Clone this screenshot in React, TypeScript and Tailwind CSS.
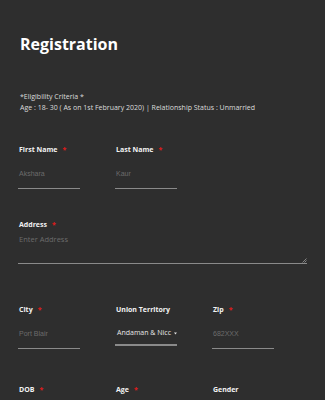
import React from "react";

const Req = () => <span className="ml-[5px] text-[#e01b1b]">*</span>;

function Label({ text, req }: { text: string; req?: boolean }) {
  return (
    <div className="h-[12px] leading-[12px] text-[7px] font-bold text-[#f2f2f2] whitespace-nowrap pl-[1px]">
      {text}
      {req && <Req />}
    </div>
  );
}

function Field({ label, req, placeholder }: { label: string; req?: boolean; placeholder: string }) {
  return (
    <div className="w-[62px] flex flex-col">
      <Label text={label} req={req} />
      <div className="mt-[12px] h-[12px] leading-[12px] pl-[1px] text-[7px] text-[#6c6c6c] [font-family:'Liberation_Sans',Arial,sans-serif]">
        {placeholder}
      </div>
      <div className="mt-[7.5px] h-[1.5px] bg-[#8a8a8a]" />
    </div>
  );
}

export default function App() {
  return (
    <div className="w-[325px] h-[400px] overflow-hidden bg-[#2e2e2e] [font-family:'Open_Sans',sans-serif]">
      <div className="pl-[20px] pt-[31px]">
        <div className="text-[16px] font-bold leading-[26px] text-white">Registration</div>
      </div>
      <div className="pl-[20px] pt-[35px] text-[7px] leading-[10.5px] text-[#dcdcdc]">
        <div>*Eligibility Criteria *</div>
        <div>Age : 18- 30 ( As on 1st February 2020) | Relationship Status : Unmarried</div>
      </div>
      <div className="pl-[18px] pt-[31px] flex gap-[35px]">
        <Field label="First Name" req placeholder="Akshara" />
        <Field label="Last Name" req placeholder="Kaur" />
      </div>
      <div className="pl-[18px] pr-[18px] pt-[29.5px] flex flex-col">
        <Label text="Address" req />
        <div className="mt-[2px] pl-[1px] text-[7.5px] leading-[12px] text-[#6c6c6c]">Enter Address</div>
        <div className="relative mt-[18px] h-[1.5px] bg-[#8a8a8a]">
          <svg className="absolute right-0 bottom-[1px]" width="5" height="5" viewBox="0 0 5 5">
            <path d="M4.5 0.5 L0.5 4.5 M4.5 2.5 L2.5 4.5" stroke="#9a9a9a" strokeWidth="0.8" />
          </svg>
        </div>
      </div>
      <div className="pl-[18px] pt-[40px] flex gap-[35px]">
        <Field label="City" req placeholder="Port Blair" />
        <div className="w-[62px] flex flex-col">
          <Label text="Union Territory" />
          <div className="mt-[11px] h-[12px] leading-[12px] pl-[2px] text-[7px] text-[#e6e6e6] flex items-center whitespace-nowrap">
            Andaman &amp; Nicc
            <svg className="ml-[3px]" width="4" height="3" viewBox="0 0 4 3">
              <path d="M0 0 H4 L2 3 Z" fill="#e6e6e6" />
            </svg>
          </div>
          <div className="mt-[5px] h-[1.5px] bg-[#8a8a8a]" />
        </div>
        <Field label="Zip" req placeholder="682XXX" />
      </div>
      <div className="pl-[18px] pt-[35px] flex gap-[35px]">
        <div className="w-[62px]"><Label text="DOB" req /></div>
        <div className="w-[62px]"><Label text="Age" req /></div>
        <div className="w-[62px]"><Label text="Gender" /></div>
      </div>
    </div>
  );
}
